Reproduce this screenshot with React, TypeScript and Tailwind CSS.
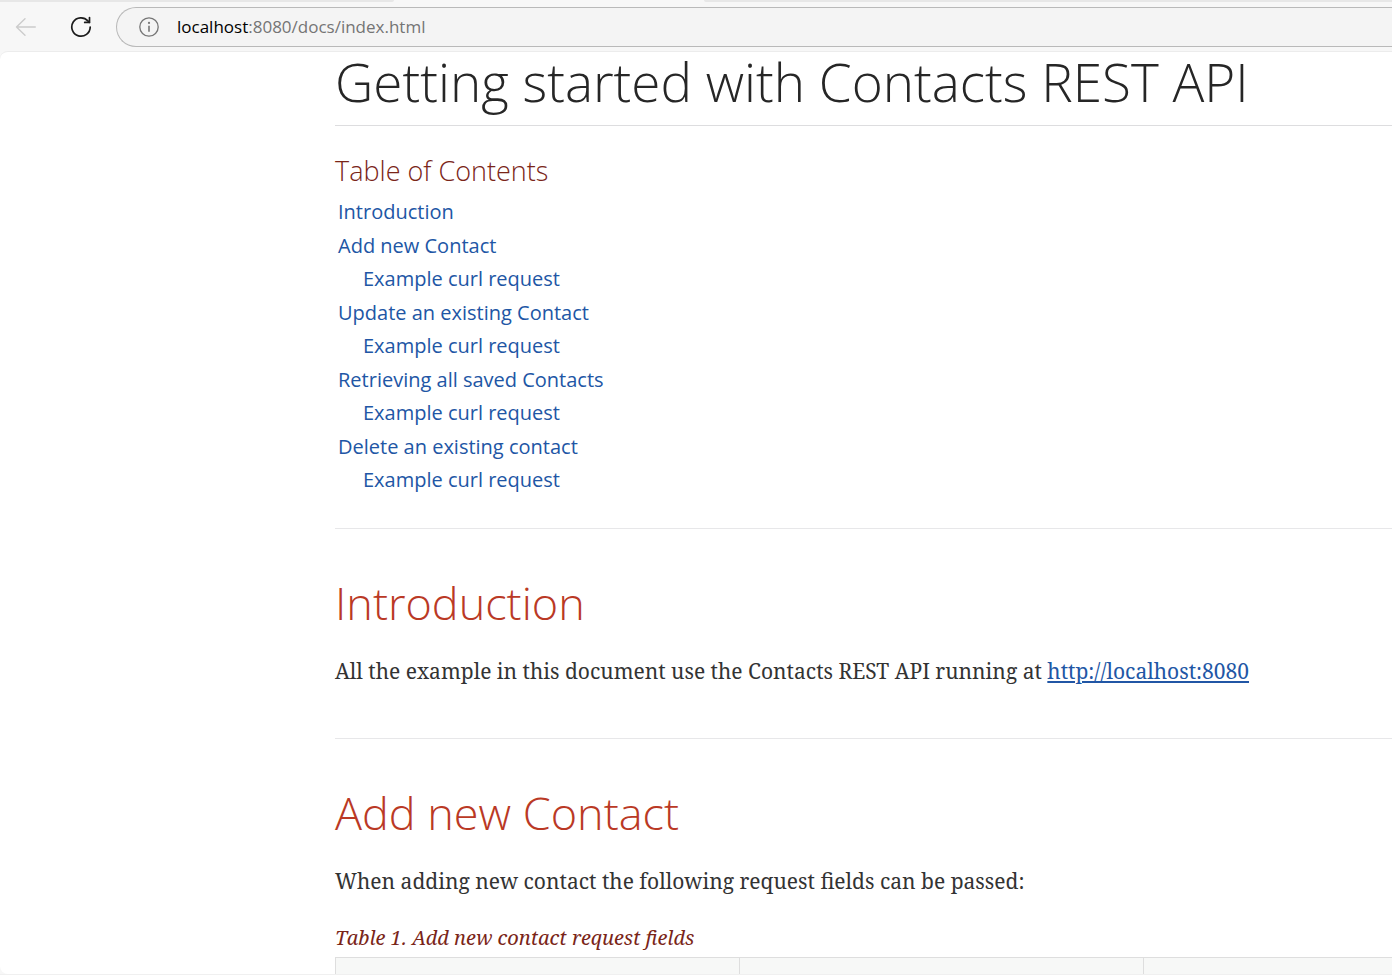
import React from "react";

const SANS = "font-['Open_Sans','Noto_Sans',sans-serif]";
const SERIF = "font-['Noto_Serif','Droid_Serif','Liberation_Serif',serif]";

const CONTENTS = [
  { label: "Introduction", href: "#introduction", children: [] },
  { label: "Add new Contact", href: "#add", children: ["#add-curl"] },
  { label: "Update an existing Contact", href: "#update", children: ["#update-curl"] },
  { label: "Retrieving all saved Contacts", href: "#list", children: ["#list-curl"] },
  { label: "Delete an existing contact", href: "#delete", children: ["#delete-curl"] },
];

function BrowserBar() {
  return (
    <header className="shrink-0 bg-[#f7f7f7]">
      <div className="flex h-[2px] justify-between">
        <div className="w-[394px] rounded-br-sm bg-[#e7e7e7]" />
        <div className="ml-[310px] flex-1 rounded-bl-sm bg-[#e7e7e7]" />
      </div>
      <div className="flex h-[49px] items-center overflow-hidden">
        <button type="button" aria-label="Back" className="ml-[15px] flex h-6 w-6 items-center" disabled>
          <svg width="22" height="20" viewBox="0 0 22 20" fill="none" stroke="#cccccc" strokeWidth="1.4" strokeLinecap="round" strokeLinejoin="round">
            <path d="M20.3 10H1.5M10 1.7L1.5 10l8.5 8.3" />
          </svg>
        </button>
        <button type="button" aria-label="Refresh" className="ml-[30px] flex h-6 w-6 items-center justify-center">
          <svg width="22" height="22" viewBox="0 0 22 22" fill="none" stroke="#1b1b1b" strokeWidth="1.7" strokeLinecap="round" strokeLinejoin="round">
            <path d="M20.2 11a9.2 9.2 0 1 1-2.3-6.1L19.3 6.3" />
            <path d="M19.5 1.6v4.8h-4.8" />
          </svg>
        </button>
        <div className="ml-[23px] flex h-10 min-w-0 flex-1 items-center rounded-l-full border border-r-0 border-[#b9b9b9] bg-[#f4f4f4] pl-[22px]">
          <svg width="20" height="20" viewBox="0 0 20 20" fill="none" stroke="#767676" strokeWidth="1.3">
            <circle cx="10" cy="10" r="9.2" />
            <path d="M10 8.7v6" strokeWidth="1.6" />
            <circle cx="10" cy="5.9" r="1.1" fill="#767676" stroke="none" />
          </svg>
          <div className="ml-[18px] font-['Segoe_UI','Open_Sans',sans-serif] text-[17px] leading-6 text-[#757575]">
            <span className="text-black">localhost</span>:8080/docs/index.html
          </div>
        </div>
      </div>
    </header>
  );
}

function SectionTitle({ children }: { children: React.ReactNode }) {
  return <h2 className={`${SANS} text-[45px] font-light leading-[56px] text-[#ba3925]`}>{children}</h2>;
}

export default function App() {
  return (
    <div className="flex h-screen flex-col overflow-hidden bg-[#f7f7f7]">
      <BrowserBar />
      <main className="min-h-0 flex-1 rounded-l-lg border-t border-[#ececec] bg-white pl-[335px]">
        <h1 className={`${SANS} border-b border-[#dddddf] pb-[14px] text-[53px] font-light leading-[59px] text-[#262626]`}>
          Getting started with Contacts REST API
        </h1>
        <nav aria-labelledby="toc" className={`${SANS} border-b border-[#e7e7e9] pb-8 pt-[27px]`}>
          <h2 id="toc" className="text-[27px] font-light leading-9 text-[#7a2518]">
            Table of Contents
          </h2>
          <ul className="flex flex-col gap-px pl-[3px] pt-[6px] text-[20px] leading-[33px] text-[#2156a5]">
            {CONTENTS.map((item) => (
              <li key={item.href}>
                <a href={item.href}>{item.label}</a>
                {item.children.length > 0 && (
                  <ul className="pl-[25px]">
                    {item.children.map((href) => (
                      <li key={href}>
                        <a href={href}>Example curl request</a>
                      </li>
                    ))}
                  </ul>
                )}
              </li>
            ))}
          </ul>
        </nav>
        <section id="introduction" className="border-b border-[#e7e7e9] pb-[50px] pt-[46px]">
          <SectionTitle>Introduction</SectionTitle>
          <p className={`${SERIF} mt-[23px] text-[21px] leading-[34px] text-[#333333]`}>
            All the example in this document use the Contacts REST API running at{" "}
            <a href="http://localhost:8080" className="text-[#2156a5] underline">http://localhost:8080</a>
          </p>
        </section>
        <section id="add" className="pt-[46px]">
          <SectionTitle>Add new Contact</SectionTitle>
          <p className={`${SERIF} mt-[23px] text-[21px] leading-[34px] text-[#333333]`}>
            When adding new contact the following request fields can be passed:
          </p>
          <table className="mt-[25px] w-full table-fixed border-collapse">
            <caption className={`${SERIF} pb-1 text-left text-[20px] italic leading-[30px] text-[#7a2518]`}>
              Table 1. Add new contact request fields
            </caption>
            <thead>
              <tr className="h-[52px] bg-[#f7f8f7]">
                <th className="w-[404px] border border-[#dedede]" />
                <th className="w-[404px] border border-[#dedede]" />
                <th className="border border-r-0 border-[#dedede]" />
              </tr>
            </thead>
          </table>
        </section>
      </main>
      <div className="relative h-px shrink-0 bg-[#f0f0f0]" />
    </div>
  );
}
